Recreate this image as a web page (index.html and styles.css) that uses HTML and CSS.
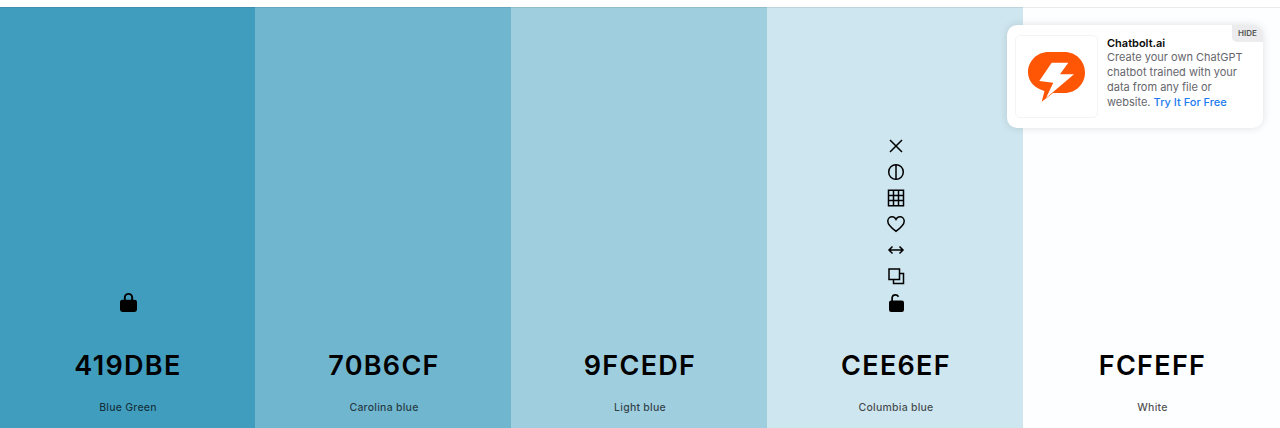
FILE: index.html

```html
<!DOCTYPE html>
<html lang="en">
<head>
  <meta charset="UTF-8">
  <meta name="viewport" content="width=device-width, initial-scale=1.0">
  <title>Color Palette</title>
  <link rel="stylesheet" href="styles.css">
</head>
<body>
  <div class="topbar"></div>
  <div class="palette">
    <div class="swatch c1">
      <div class="tools">
        <svg class="lock" viewBox="2.4 1.200 13.200 15.700" preserveAspectRatio="none"><path fill="#000" d="M9 1.200a3.600 3.600 0 0 0-3.600 3.600v1.900H4.300A1.900 1.900 0 0 0 2.400 8.600v6.300a2 2 0 0 0 1.900 2h9.400a2 2 0 0 0 1.900-2V8.600a1.900 1.900 0 0 0-1.900-1.900h-1.100V4.800A3.600 3.600 0 0 0 9 1.200zm0 1.500a2.100 2.100 0 0 1 2.100 2.100v1.900H6.900V4.800A2.100 2.100 0 0 1 9 2.700z"/></svg>
      </div>
      <div class="hex">419DBE</div>
      <div class="name">Blue Green</div>
    </div>
    <div class="swatch c2">
      <div class="hex">70B6CF</div>
      <div class="name">Carolina blue</div>
    </div>
    <div class="swatch c3">
      <div class="hex">9FCEDF</div>
      <div class="name">Light blue</div>
    </div>
    <div class="swatch c4">
      <div class="tools">
        <svg class="ico" viewBox="0 0 18 18"><path class="line" d="M3 3l12 12M15 3L3 15"/></svg>
        <svg class="ico" viewBox="0 0 18 18"><circle class="line" cx="9" cy="9" r="7.300"/><path class="line" d="M9 1.700v14.600"/></svg>
        <svg class="ico" viewBox="0 0 18 18"><path class="line" d="M1.500 1.300h15v15.400h-15zM6.500 1.300v15.400M11.500 1.300v15.400M1.500 6.400h15M1.500 11.600h15"/></svg>
        <svg class="ico" viewBox="0 0 18 18"><path class="line" d="M9 16.300C5 13.300.8 10.200.8 6.200.8 3.700 2.800 1.800 5 1.800c1.700 0 3.200.9 4 2.500.8-1.600 2.300-2.500 4-2.500 2.200 0 4.200 1.900 4.200 4.400 0 4-4.200 7.100-8.200 10.100z"/></svg>
        <svg class="ico" viewBox="0 0 18 18"><path class="line" d="M2 9h14M5.500 5.500L2 9l3.500 3.500M12.500 5.500L16 9l-3.500 3.500"/></svg>
        <svg class="ico" viewBox="0 0 18 18"><path class="line" d="M2 2h10.500v10.500H2zM12.500 6.500h4v10H6.500v-4"/></svg>
        <svg class="unlock" viewBox="2.4 1 13.200 16" preserveAspectRatio="none"><path fill="#000" d="M8 1a3.700 3.700 0 0 0-3.600 3v2.700h-.1A1.900 1.900 0 0 0 2.400 8.600v6.300a2 2 0 0 0 1.900 2h9.400a2 2 0 0 0 1.900-2V8.600a1.900 1.900 0 0 0-1.900-1.900H5.900V4.200A2.200 2.200 0 0 1 8 2.500c.9 0 1.700.5 2.100 1.300l1.300-.7A3.800 3.800 0 0 0 8 1z"/></svg>
      </div>
      <div class="hex">CEE6EF</div>
      <div class="name">Columbia blue</div>
    </div>
    <div class="swatch c5">
      <div class="hex">FCFEFF</div>
      <div class="name">White</div>
    </div>
  </div>

  <div class="ad">
    <div class="ad-logo">
      <svg width="60" height="52" viewBox="0 0 60 52"><path fill="#ff5606" d="M21.500 1h16C49 1 58 10 58 21.500S49 42 37.500 42H26L14.700 50.700 17.500 40C8 37.500 1 30.500 1 21.500 1 10 10 1 21.500 1z"/><path fill="#fff" d="M24.700 11.700h16.600L33 23.300h14L19 47l7.300-15.300L12.300 30z"/></svg>
    </div>
    <div class="ad-text">
      <div class="ad-title">Chatbolt.ai</div>
      <div class="ad-body">Create your own ChatGPT chatbot trained with your data from any file or website. <a class="ad-link">Try It For Free</a></div>
    </div>
    <div class="ad-hide">HIDE</div>
  </div>
</body>
</html>
```

FILE: styles.css

```css
* {
  box-sizing: border-box;
}
html, body {
  margin: 0;
  height: 428px;
  overflow: hidden;
  background: #fff;
}
body {
  font-family: Inter, "Liberation Sans", sans-serif;
  color: #000;
}
.topbar {
  position: relative;
  height: 7px;
  box-shadow: 0 1px 0 rgba(0, 0, 0, 0.08);
}
.palette {
  display: flex;
  height: 421px;
  margin-left: -1px;
}
.swatch {
  flex: none;
  width: 256px;
  display: flex;
  flex-direction: column;
  align-items: center;
  justify-content: flex-end;
  padding: 0 0 13px 2px;
}
.c1 { background: #419dbe; }
.c2 { background: #70b6cf; }
.c3 { background: #9fcedf; }
.c4 { background: #cee6ef; }
.c5 { background: #fcfeff; flex: 1; }
.tools {
  display: flex;
  flex-direction: column;
  align-items: center;
  gap: 8px;
  margin-bottom: 37px;
}
.ico {
  display: block;
  width: 18px;
  height: 18px;
}
.lock {
  display: block;
  width: 17px;
  height: 19px;
}
.unlock {
  display: block;
  width: 15px;
  height: 18px;
  margin-top: 1px;
}
.line {
  fill: none;
  stroke: #000;
  stroke-width: 1.500;
}
.hex {
  font-size: 27px;
  font-weight: 600;
  line-height: 34px;
  letter-spacing: 1.300px;
}
.name {
  margin-top: 18px;
  font-size: 10.500px;
  font-weight: 500;
  line-height: 14px;
  letter-spacing: 0.250px;
  color: rgba(0, 0, 0, 0.7);
}
.ad {
  position: absolute;
  top: 25px;
  left: 1007px;
  width: 256px;
  height: 103px;
  display: flex;
  gap: 9px;
  padding: 10px 8px;
  background: #fff;
  border-radius: 10px;
  box-shadow: 0 0 8px rgba(0, 0, 0, 0.12);
}
.ad-logo {
  flex: none;
  width: 83px;
  height: 83px;
  display: flex;
  align-items: center;
  justify-content: center;
  border: 1px solid #f4f4f4;
  border-radius: 5px;
}
.ad-text {
  padding-top: 1px;
}
.ad-title {
  font-size: 11px;
  font-weight: 600;
  line-height: 14px;
  color: #0a0a0a;
}
.ad-body {
  font-size: 11px;
  line-height: 15px;
  color: #66666c;
}
.ad-link {
  color: #1a7aee;
  font-weight: 500;
}
.ad-hide {
  position: absolute;
  top: 0;
  right: 0;
  width: 31px;
  height: 17px;
  background: #ececef;
  border-radius: 0 10px 0 5px;
  color: #555;
  font-size: 8px;
  font-weight: 600;
  line-height: 17px;
  text-align: center;
}
```
